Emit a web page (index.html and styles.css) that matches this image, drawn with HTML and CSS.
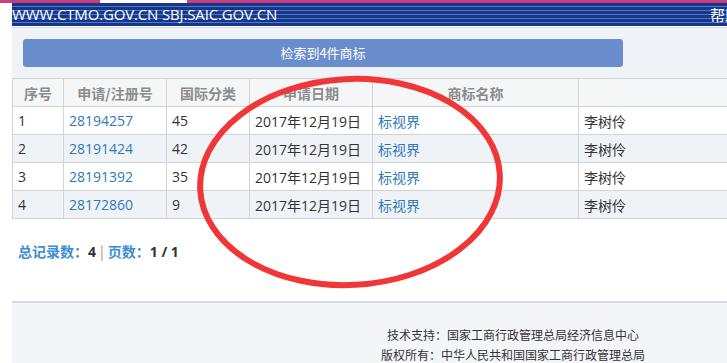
FILE: index.html
```html
<!DOCTYPE html>
<html lang="zh-CN">
<head>
<meta charset="utf-8">
<title>商标检索</title>
<link rel="stylesheet" href="styles.css">
</head>
<body>
<div class="topstrip"></div>
<div class="page">
  <div class="banner">
    <span class="site">WWW.CTMO.GOV.CN SBJ.SAIC.GOV.CN</span>
    <span class="help">帮助</span>
  </div>
  <div class="searchbox">
    <div class="btn">检索到4件商标</div>
  </div>
  <table class="results">
    <thead>
      <tr>
        <th class="c1">序号</th>
        <th class="c2">申请/注册号</th>
        <th class="c3">国际分类</th>
        <th class="c4">申请日期</th>
        <th class="c5">商标名称</th>
        <th class="c6"></th>
      </tr>
    </thead>
    <tbody>
      <tr><td>1</td><td><a>28194257</a></td><td>45</td><td>2017年12月19日</td><td><a>标视界</a></td><td>李树伶</td></tr>
      <tr class="alt"><td>2</td><td><a>28191424</a></td><td>42</td><td>2017年12月19日</td><td><a>标视界</a></td><td>李树伶</td></tr>
      <tr><td>3</td><td><a>28191392</a></td><td>35</td><td>2017年12月19日</td><td><a>标视界</a></td><td>李树伶</td></tr>
      <tr class="alt"><td>4</td><td><a>28172860</a></td><td>9</td><td>2017年12月19日</td><td><a>标视界</a></td><td>李树伶</td></tr>
    </tbody>
  </table>
  <div class="summary">
    <span class="lbl">总记录数：</span><b>4</b><span class="sep">|</span><span class="lbl">页数：</span><b>1 / 1</b>
  </div>
  <div class="footer">
    <p>技术支持：国家工商行政管理总局经济信息中心</p>
    <p>版权所有：中华人民共和国国家工商行政管理总局</p>
  </div>
</div>
<svg class="mark" width="727" height="363" viewBox="0 0 727 363">
  <ellipse cx="350" cy="182" rx="150" ry="103" fill="none" stroke="#f03636" stroke-width="6" transform="rotate(-3 350 182)"/>
</svg>
</body>
</html>
```
FILE: styles.css
```css
html, body {
  margin: 0;
  padding: 0;
  overflow: hidden;
  background: #fff;
}
body {
  width: 727px;
  height: 363px;
  position: relative;
  font-family: "Noto Sans CJK SC", "Noto Sans", sans-serif;
  color: #333;
}
.topstrip {
  height: 3px;
  background: linear-gradient(to right, #c93f7e 0 100px, #fff 100px 187px, #c93f7e 187px);
}
.page {
  width: 1002px;
  margin-left: 12px;
}
.banner {
  height: 23px;
  background: repeating-linear-gradient(to bottom, #14378c 0 3px, #5877c2 3px 4px);
  display: flex;
  align-items: center;
  justify-content: space-between;
  border-bottom: 1px solid #fff;
}
.site {
  color: #fff;
  font-family: "Open Sans", "Noto Sans", sans-serif;
  font-size: 15px;
  letter-spacing: -0.15px;
  line-height: 23px;
}
.help {
  color: #fff;
  font-size: 15px;
  line-height: 23px;
  margin-right: 274px;
}
.searchbox {
  background: #eff3f8;
  border-top: 1px solid #d9dde3;
  padding: 11px 0 11px 11px;
}
.btn {
  width: 600px;
  height: 28px;
  background: #6a8dcd;
  border-radius: 3px;
  color: #fff;
  font-size: 13px;
  line-height: 28px;
  text-align: center;
}
.results {
  width: 100%;
  border-collapse: collapse;
  font-family: "Open Sans", "Noto Sans CJK SC", sans-serif;
  font-size: 14px;
}
.results th, .results td {
  border: 1px solid #d3d3d3;
  height: 27px;
  padding: 0 0 0 5px;
  white-space: nowrap;
  font-weight: normal;
}
.results th {
  background: #f4f6f7;
  color: #8c8c8c;
  font-family: "Noto Sans CJK SC", sans-serif;
  font-weight: bold;
  text-align: center;
  padding: 0;
}
.results td {
  text-align: left;
}
.c1 { width: 50px; }
.c2 { width: 102px; }
.c3 { width: 82px; }
.c4 { width: 122px; }
.c5 { width: 205px; }
.results tr.alt td { background: #eff3f8; }
.results a { color: #2f7ab8; }
.summary {
  padding: 22px 0 0 6px;
  height: 60px;
  font-size: 14px;
  line-height: 20px;
}
.summary .lbl { color: #3b8ed2; font-weight: bold; }
.summary b { color: #333; font-family: "Open Sans", sans-serif; }
.summary .sep { color: #a09070; margin: 0 4px; }
.footer {
  border-top: 2px solid #d6d9e7;
  background: #f4f5f9;
  height: 80px;
  padding-top: 22px;
  text-align: center;
  font-size: 12px;
  color: #333;
}
.footer p {
  margin: 0;
  line-height: 20px;
}
.mark {
  position: absolute;
  left: 0;
  top: 0;
  pointer-events: none;
}
```
